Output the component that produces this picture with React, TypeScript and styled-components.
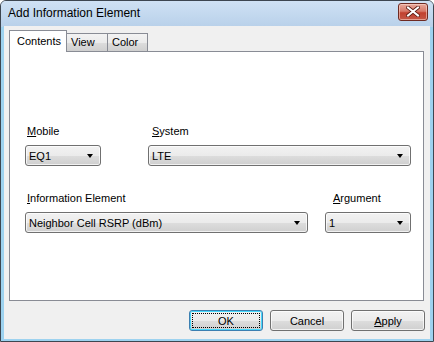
import React from 'react';
import styled, { createGlobalStyle } from 'styled-components';

const GlobalStyle = createGlobalStyle`
  html, body {
    margin: 0;
    padding: 0;
    background: #ffffff;
  }
  body {
    font-family: "Liberation Sans", Arial, sans-serif;
    font-size: 11px;
    color: #000;
  }
`;

const Window = styled.div`
  box-sizing: border-box;
  width: 434px;
  height: 342px;
  border: 1px solid #3d4650;
  border-radius: 6px 6px 0 0;
  background: linear-gradient(to bottom, #c9def3 0px, #b9d1ea 26px, #9dd2ef 26px, #9dd2ef 100%);
  display: flex;
  flex-direction: column;
  padding: 0 3px 2px 2px;
  overflow: hidden;
`;

const TitleBar = styled.div`
  height: 25px;
  display: flex;
  align-items: center;
  background: linear-gradient(to bottom, #cfe1f4, #b9d1ea);
  margin: 0 -3px 0 -2px;
  padding-left: 7px;
  padding-right: 5px;
`;

const Title = styled.div`
  flex: 1;
  font-size: 12px;
  color: #000;
  padding-bottom: 2px;
`;

const CloseButton = styled.div`
  box-sizing: border-box;
  width: 30px;
  height: 18px;
  margin-top: -4px;
  border: 1px solid #6e2a22;
  border-radius: 3px;
  background: linear-gradient(to bottom, #e8a99c 0%, #d77a6a 45%, #c2412f 55%, #c45847 100%);
  box-shadow: inset 0 0 0 1px rgba(255, 220, 210, 0.55);
  display: flex;
  align-items: center;
  justify-content: center;
`;

const Client = styled.div`
  flex: 1;
  background: #f0f0f0;
  display: flex;
  flex-direction: column;
  padding: 4px 6px 0 5px;
  border-left: 1px solid #9dd2ef;
`;

const TabStrip = styled.div`
  display: flex;
  align-items: flex-end;
  height: 21px;
`;

const Tab = styled.div<{ $active?: boolean; $first?: boolean; $w: number }>`
  box-sizing: border-box;
  position: relative;
  z-index: ${p => (p.$active ? 2 : 1)};
  height: ${p => (p.$active ? '22px' : '18px')};
  margin-bottom: ${p => (p.$active ? '-1px' : '0')};
  margin-left: ${p => (p.$first ? '0' : '-1px')};
  width: ${p => p.$w}px;
  border: 1px solid #898c95;
  border-bottom: 0;
  background: ${p =>
    p.$active ? '#ffffff' : 'linear-gradient(to bottom, #f3f3f3 0%, #ebebeb 50%, #dddddd 51%, #cfcfcf 100%)'};
  padding-left: ${p => (p.$active ? '7px' : '4px')};
  padding-top: ${p => (p.$active ? '4px' : '2px')};
  line-height: 13px;
`;

const Panel = styled.div`
  box-sizing: border-box;
  height: 250px;
  background: #ffffff;
  border: 1px solid #898c95;
  padding: 73px 12px 0 15px;
  display: flex;
  flex-direction: column;
  gap: 26px;
`;

const Row = styled.div`
  display: flex;
  align-items: flex-end;
`;

const Field = styled.div<{ $w?: number; $ml?: number }>`
  display: flex;
  flex-direction: column;
  gap: 7px;
  ${p => (p.$w ? `width: ${p.$w}px;` : 'flex: 1;')}
  margin-left: ${p => p.$ml ?? 0}px;
`;

const Label = styled.label<{ $indent?: number }>`
  line-height: 13px;
  padding-left: ${p => p.$indent ?? 2}px;
`;

const Combo = styled.div`
  box-sizing: border-box;
  height: 21px;
  border: 1px solid #707070;
  border-radius: 3px;
  background: linear-gradient(to bottom, #f2f2f2 0%, #ebebeb 50%, #dddddd 51%, #cfcfcf 100%);
  box-shadow: inset 0 0 0 1px rgba(255, 255, 255, 0.7);
  display: flex;
  align-items: center;
  padding: 0 6px 0 3px;
`;

const ComboText = styled.span`
  flex: 1;
  white-space: nowrap;
`;

const Arrow = styled.span`
  width: 0;
  height: 0;
  border-left: 3.5px solid transparent;
  border-right: 3.5px solid transparent;
  border-top: 4px solid #000;
  margin-right: 1px;
`;

const ButtonRow = styled.div`
  display: flex;
  justify-content: flex-end;
  gap: 7px;
  margin-top: 9px;
  margin-right: -1px;
`;

const Button = styled.div<{ $default?: boolean }>`
  box-sizing: border-box;
  width: 74px;
  height: 21px;
  border: 1px solid ${p => (p.$default ? '#3c7fb1' : '#707070')};
  border-radius: 3px;
  background: linear-gradient(to bottom, #f2f2f2 0%, #ebebeb 50%, #dddddd 51%, #cfcfcf 100%);
  box-shadow: ${p => (p.$default ? 'inset 0 0 0 1px #48d8fb' : 'inset 0 0 0 1px rgba(255,255,255,0.7)')};
  display: flex;
  align-items: center;
  justify-content: center;
  padding: 2px;
`;

const FocusRect = styled.div`
  box-sizing: border-box;
  width: 100%;
  height: 100%;
  border: 1px dotted #000;
  display: flex;
  align-items: center;
  justify-content: center;
`;

const CloseIcon = () => (
  <svg width="14" height="11" viewBox="0 0 14 11">
    <path
      d="M2 1.5 L7 5.5 L12 1.5 M2 9.5 L7 5.5 L12 9.5"
      stroke="#5a1a12"
      strokeWidth="3.6"
      fill="none"
      strokeLinecap="square"
    />
    <path
      d="M2 1.5 L7 5.5 L12 1.5 M2 9.5 L7 5.5 L12 9.5"
      stroke="#ffffff"
      strokeWidth="2"
      fill="none"
      strokeLinecap="square"
    />
  </svg>
);

const App: React.FC = () => {
  return (
    <>
      <GlobalStyle />
      <Window>
        <TitleBar>
          <Title>Add Information Element</Title>
          <CloseButton>
            <CloseIcon />
          </CloseButton>
        </TitleBar>
        <Client>
          <TabStrip>
            <Tab $active $first $w={58}>Contents</Tab>
            <Tab $w={42}>View</Tab>
            <Tab $w={41}>Color</Tab>
          </TabStrip>
          <Panel>
            <Row>
              <Field $w={76}>
                <Label><u>M</u>obile</Label>
                <Combo>
                  <ComboText>EQ1</ComboText>
                  <Arrow />
                </Combo>
              </Field>
              <Field $ml={47}>
                <Label $indent={4}><u>S</u>ystem</Label>
                <Combo>
                  <ComboText>LTE</ComboText>
                  <Arrow />
                </Combo>
              </Field>
            </Row>
            <Row>
              <Field $w={283}>
                <Label><u>I</u>nformation Element</Label>
                <Combo>
                  <ComboText>Neighbor Cell RSRP (dBm)</ComboText>
                  <Arrow />
                </Combo>
              </Field>
              <Field $ml={17}>
                <Label $indent={8}><u>A</u>rgument</Label>
                <Combo>
                  <ComboText>1</ComboText>
                  <Arrow />
                </Combo>
              </Field>
            </Row>
          </Panel>
          <ButtonRow>
            <Button $default>
              <FocusRect>OK</FocusRect>
            </Button>
            <Button>Cancel</Button>
            <Button>
              <span><u>A</u>pply</span>
            </Button>
          </ButtonRow>
        </Client>
      </Window>
    </>
  );
};

export default App;
